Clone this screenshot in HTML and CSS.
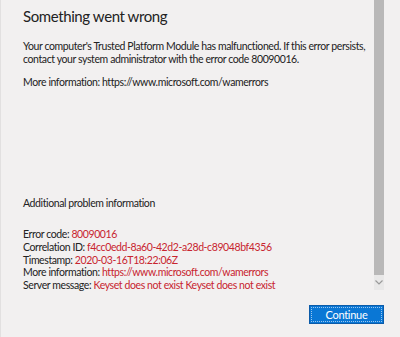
FILE: index.html
```html
<!DOCTYPE html>
<html>
<head>
<meta charset="utf-8">
<link rel="stylesheet" href="styles.css">
</head>
<body>
<div class="dialog">
  <div class="top">
    <div class="content">
      <h1 class="title">Something went wrong</h1>
      <p class="para first">Your computer's Trusted Platform Module has malfunctioned. If this error persists, contact your system administrator with the error code 80090016.</p>
      <p class="para">More information: https://www.microsoft.com/wamerrors</p>
      <div class="spacer"></div>
      <p class="para">Additional problem information</p>
      <div class="details">
        <div>Error code: <span class="red">80090016</span></div>
        <div>Correlation ID: <span class="red">f4cc0edd-8a60-42d2-a28d-c89048bf4356</span></div>
        <div>Timestamp: <span class="red">2020-03-16T18:22:06Z</span></div>
        <div>More information: <span class="red">https://www.microsoft.com/wamerrors</span></div>
        <div>Server message: <span class="red">Keyset does not exist Keyset does not exist</span></div>
      </div>
    </div>
    <div class="scrollbar">
      <div class="thumb"></div>
      <div class="arrow">
        <svg width="8" height="5" viewBox="0 0 8 5"><path d="M0.5 0.5 L4 4 L7.5 0.5" fill="none" stroke="#9a9a9a" stroke-width="1.2"/></svg>
      </div>
    </div>
  </div>
  <div class="footer">
    <button class="btn"><span class="focus">Continue</span></button>
  </div>
</div>
</body>
</html>
```
FILE: styles.css
```css
html, body {
  margin: 0;
  padding: 0;
  background: #f2f0f0;
}
.dialog {
  width: 400px;
  height: 337px;
  box-sizing: border-box;
  border-left: 1px solid #e2e0e0;
  font-family: Lato, "Open Sans", sans-serif;
  color: #222;
  display: flex;
  flex-direction: column;
}
.top {
  display: flex;
  height: 290px;
}
.content {
  flex: 1;
  padding-left: 22px;
  padding-right: 4px;
}
.title {
  font-weight: 400;
  font-size: 15px;
  line-height: 22px;
  letter-spacing: -0.4px;
  margin: 5px 0 0 0;
}
.para {
  font-size: 10.5px;
  line-height: 13px;
  letter-spacing: -0.4px;
  margin: 10px 0 0 0;
}
.para.first {
  margin-top: 13px;
}
.spacer {
  height: 98px;
}
.details {
  margin-top: 18px;
  font-size: 10.5px;
  line-height: 12.8px;
  letter-spacing: -0.4px;
}
.red {
  color: #c8242f;
}
.scrollbar {
  width: 10px;
  margin-right: 16px;
  display: flex;
  flex-direction: column;
}
.thumb {
  flex: 1;
  background: #b9b8b8;
}
.arrow {
  height: 15px;
  background: #e9e8e8;
  display: flex;
  align-items: center;
  justify-content: center;
}
.footer {
  display: flex;
  justify-content: flex-end;
  padding: 15px 16px 0 0;
}
.btn {
  width: 75px;
  height: 19px;
  padding: 1px;
  border: 1px solid #0c5ba8;
  background: #0a77d5;
  box-sizing: border-box;
  display: flex;
}
.focus {
  flex: 1;
  border: 1px dotted #9cc6ee;
  color: #fff;
  font-family: Lato, "Open Sans", sans-serif;
  font-size: 11px;
  line-height: 13px;
  letter-spacing: -0.3px;
  display: flex;
  align-items: center;
  justify-content: center;
}
```
